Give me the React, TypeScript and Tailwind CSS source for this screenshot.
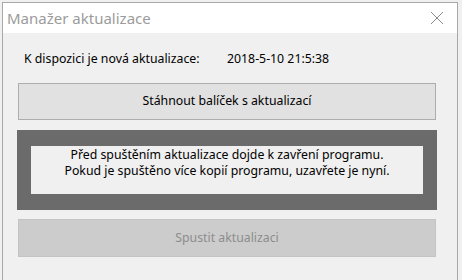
export default function App() {
  const font = { fontFamily: '"Noto Sans", "Open Sans", sans-serif' };

  return (
    <div className="w-[462px] h-[280px] bg-[#f0f0f0] pl-[2px] pt-[2px] pr-[4px] overflow-hidden" style={font}>
      <div className="h-[290px] border border-[#a8a8a8] bg-[#f0f0f0] flex flex-col">
        {/* title bar */}
        <div className="h-[30px] bg-white flex items-center justify-between pl-[4px] pr-[12px]">
          <span className="text-[15px] text-[#9b9b9b] leading-none">Manažer aktualizace</span>
          <svg width="14" height="14" viewBox="0 0 14 14" className="mr-[1px]">
            <path d="M1 1 L13 13 M13 1 L1 13" stroke="#8a8a8a" strokeWidth="1" />
          </svg>
        </div>

        <div className="pl-[15px] flex flex-col">
          <div className="h-[50px] flex items-center text-[12.3px] text-black pt-[3px]">
            <span className="ml-[6px] w-[203px]">K dispozici je nová aktualizace:</span>
            <span>2018-5-10 21:5:38</span>
          </div>

          <button className="w-[418px] h-[37px] bg-[#e1e1e1] border border-[#adadad] text-[12.3px] text-black flex items-center justify-center">
            Stáhnout balíček s aktualizací
          </button>

          <div className="mt-[10px] -ml-[1px] w-[420px] bg-[#6b6b6b] px-[14px] py-[16px]">
            <div className="h-[48px] bg-[#f0f0f0] flex flex-col items-center pt-[1px] text-[12.3px] leading-[16px] text-black">
              <span>Před spuštěním aktualizace dojde k zavření programu.</span>
              <span>Pokud je spuštěno více kopií programu, uzavřete je nyní.</span>
            </div>
          </div>

          <button
            disabled
            className="mt-[9px] w-[418px] h-[38px] bg-[#cccccc] border border-[#c4c4c4] text-[12.3px] text-[#8c8c8c] flex items-center justify-center"
          >
            Spustit aktualizaci
          </button>
        </div>
      </div>
    </div>
  );
}
